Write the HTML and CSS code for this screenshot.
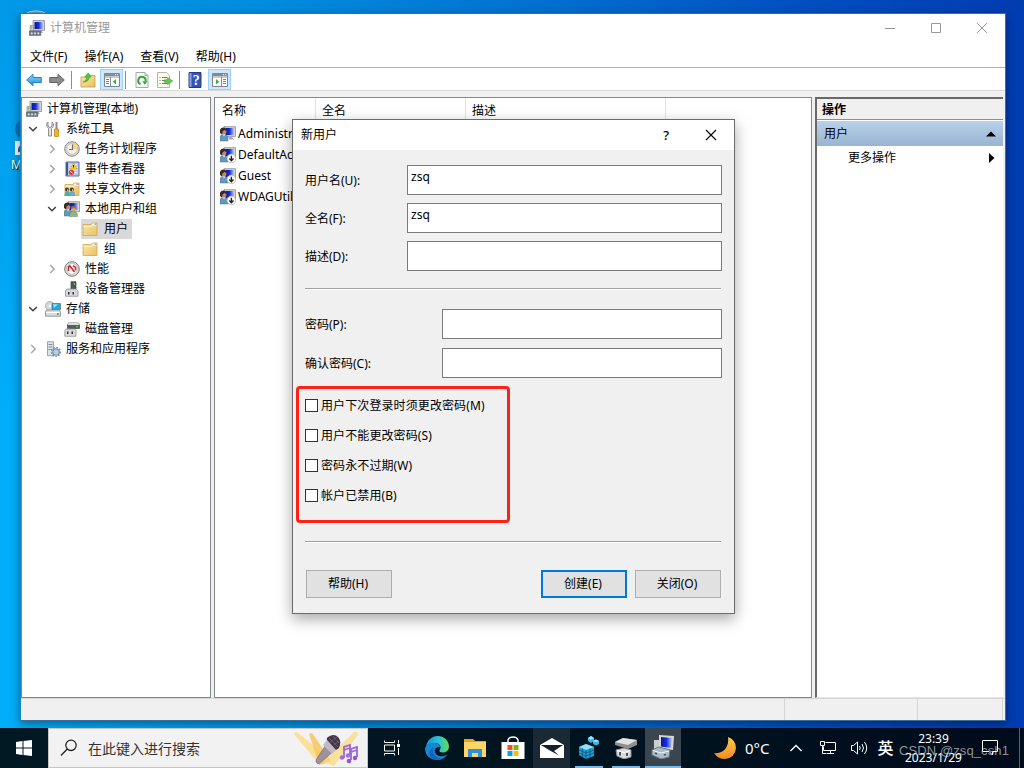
FILE: index.html
```html
<!DOCTYPE html>
<html lang="zh-CN">

<head>
    <meta charset="UTF-8">
    <meta name="viewport" content="width=device-width, initial-scale=1.0">
    <title>计算机管理</title>
    <link rel="stylesheet" href="styles.css">
</head>

<body>
    <!-- Shared icons -->
    <svg class="sprite" width="0" height="0">
        <defs>
            <linearGradient id="screen" x1="0" y1="0" x2="1" y2="0">
                <stop offset="0" stop-color="#0813a5" />
                <stop offset=".5" stop-color="#1730dd" />
                <stop offset="1" stop-color="#b7c9ff" />
            </linearGradient>
            <linearGradient id="folderFill" x1="0" y1="0" x2="1" y2="1">
                <stop offset="0" stop-color="#fbe8a6" />
                <stop offset="1" stop-color="#e9c163" />
            </linearGradient>
            <linearGradient id="arrowBlue" x1="0" y1="0" x2="0" y2="1">
                <stop offset="0" stop-color="#8fdcff" />
                <stop offset="1" stop-color="#168ad8" />
            </linearGradient>
            <linearGradient id="edgeTop" x1="0" y1="0" x2="1" y2="0">
                <stop offset="0" stop-color="#1693d9" />
                <stop offset=".55" stop-color="#2bc3d2" />
                <stop offset="1" stop-color="#62dc55" />
            </linearGradient>
            <linearGradient id="moonFill" x1="0" y1="0" x2="0" y2="1">
                <stop offset="0" stop-color="#ffc94d" />
                <stop offset="1" stop-color="#f08a24" />
            </linearGradient>
        </defs>
        <symbol id="computer" viewBox="0 0 16 16">
            <path d="M4 .5h11.500v10H4z" fill="#d5d2c8" stroke="#8b8d94" stroke-width=".8" />
            <path d="M5.500 2h8.500v7H5.500z" fill="url(#screen)" />
            <path d="M1 5.500h3.500V11H1z" fill="#c8c9c7" stroke="#81858b" stroke-width=".6" />
            <path d="M1.600 6.300h1.600v2H1.600z" fill="#65c95c" />
            <path d="M9 11h4l1 2H9z" fill="#b9bbc0" />
            <path d="M.5 11h11.300v4.400H.5z" fill="#6d7c85" stroke="#4c5a62" stroke-width=".6" />
            <path d="M2 12.600h1.600v1.600H2zM5.200 12.600h1.600v1.600H5.200zM8.500 12.600h1.600v1.600H8.500z" fill="#e4e9ec" />
        </symbol>
        <symbol id="user" viewBox="0 0 16 16">
            <path d="M4 .7h11.500v10H4z" fill="#d6d3ca" stroke="#8d8f96" stroke-width=".8" />
            <path d="M5.500 2h8.500v7H5.500z" fill="url(#screen)" />
            <path d="M9 11h3l2 2.500H9z" fill="#a7a9ac" />
            <path d="M0 15v-3.500q0-3 3.800-3 4.200 0 4.200 3.500V15z" fill="#6298bd" stroke="#486f8b" stroke-width=".5" />
            <circle cx="3.700" cy="5.800" r="2.700" fill="#c58a62" />
            <path d="M0 7V3.800Q1 1.300 4 1.500 6.500 2 6.300 5L4.500 4 2.500 5.500 2 8.500z" fill="#3a2a20" />
            <path d="M3 8.600l1 2 1.200-2z" fill="#fff" />
        </symbol>
        <symbol id="disabledUser" viewBox="0 0 16 16">
            <use href="#user" />
            <circle cx="11.400" cy="11.400" r="4.400" fill="#fff" stroke="#a5a5a5" stroke-width=".7" />
            <path d="M11.400 8.700v4.500M9.300 11.600l2.100 2.100 2.100-2.100" fill="none" stroke="#222" stroke-width="1.400" />
        </symbol>
        <symbol id="folder" viewBox="0 0 16 16">
            <path d="M1 3.500h8l1.200-1.500H15v12.500H1z" fill="url(#folderFill)" stroke="#d0a552" stroke-width=".8" />
            <path d="M10.500 2.600h3.800v1.500h-3.800z" fill="#fff" />
            <path d="M12.400 2.600h1.900v1.200h-1.900z" fill="#3e9be2" />
            <path d="M1.500 5.500h8L11 4.300h3.500" fill="none" stroke="#fff3c9" stroke-width=".8" />
        </symbol>
        <symbol id="expanded" viewBox="0 0 10 10">
            <path d="M1.200 3L5 6.800 8.800 3" fill="none" stroke="#404040" stroke-width="1.500" />
        </symbol>
        <symbol id="collapsed" viewBox="0 0 10 10">
            <path d="M3.200 1l4 4-4 4" fill="none" stroke="#a3a3a3" stroke-width="1.400" />
        </symbol>
        <symbol id="paneWindow" viewBox="0 0 16 16">
            <path d="M.5 1.500h15v13H.5z" fill="#fff" stroke="#7e8790" />
            <path d="M1 2h14v2.500H1z" fill="#858e96" />
            <path d="M11 2.700h1M13 2.700h1" stroke="#fff" />
            <path d="M1 5.500h14" stroke="#c5cbd0" />
        </symbol>
        <symbol id="edge" viewBox="0 0 24 24">
            <path d="M1 11C2 4 7 0 12.500 0 19 0 24 4.800 24 10.500c0 3.500-2.500 6-6 6-3 0-4.300-1-3.400-2.200 2.700-3.800-.5-7.300-4.600-7.300C6 7 2.500 8.700 1 11z" fill="url(#edgeTop)" />
            <path d="M0 12.500C1 8.500 5.500 6.500 9.500 6.800c3.500.3 5.500 2.500 5.500 4.200-6-1-7 6-2 8.500 3 1.500 6.500 1 9.500-1.500C20 22 16.500 24 12 24 5 24 0 19 0 12.500z" fill="#1687d6" />
            <path d="M8.500 11.200C6 16 10 22.500 17 22.500c-3 2-7 1.500-9.500 0C2.500 19 4 13.500 8.500 11.200z" fill="#1263b8" />
        </symbol>
    </svg>

    <div class="desktop">
        <svg class="recycle-bin" viewBox="0 0 24 6"><path d="M0 5.500Q12-2 24 5.500" fill="#5a9fc9" stroke="#bdd2dd" /></svg>
        <div class="desktop-shortcut">
            <svg class="shortcut-edge" viewBox="0 0 24 24"><path d="M24 0C9 0 0 7 0 15q0 6 7 9h17z" fill="#0c72bd" /></svg>
            <svg class="shortcut-arrow" viewBox="0 0 14 14"><path d="M0 0h14v14H0z" fill="#f4f4f4" /><path d="M4 11q-1-6 5-7" fill="none" stroke="#265f9d" stroke-width="2" /></svg>
            <span>M</span>
        </div>

        <!-- Computer Management -->
        <div class="window">
            <div class="title-bar">
                <svg class="icon"><use href="#computer" /></svg>
                <span class="window-title">计算机管理</span>
                <div class="window-controls">
                    <svg viewBox="0 0 12 12"><path d="M1 6.500h10" /></svg>
                    <svg viewBox="0 0 12 12"><path d="M1.500 1.500h9v9h-9z" /></svg>
                    <svg viewBox="0 0 12 12"><path d="M1 1l10 10M11 1L1 11" /></svg>
                </div>
            </div>
            <div class="menu-bar">
                <span>文件(F)</span>
                <span>操作(A)</span>
                <span>查看(V)</span>
                <span>帮助(H)</span>
            </div>
            <div class="toolbar">
                <svg class="icon" viewBox="0 0 16 16"><path d="M.7 8L7 2.300V5.500h8.300v5H7v3.200z" fill="url(#arrowBlue)" stroke="#2682bd" /></svg>
                <svg class="icon forward" viewBox="0 0 16 16"><path d="M15.300 8L9 2.300V5.500H.7v5H9v3.200z" fill="#8c8c8c" stroke="#666" /></svg>
                <i class="divider"></i>
                <svg class="icon up" viewBox="0 0 16 16"><path d="M1 5h5l1-1.500h8V15H1z" fill="url(#folderFill)" stroke="#c39d50" stroke-width=".8" /><path d="M3 10q4-1 4-5H4.800L8.200 1l3 4H9.200Q9 10 3 10z" fill="#58c936" stroke="#2d9224" stroke-width=".6" /></svg>
                <span class="tool-active"><svg class="icon" viewBox="0 0 16 16"><use href="#paneWindow" /><path d="M6.500 5v9" stroke="#858e96" /><path d="M2 7.500h3M2 9.500h3M2 11.500h3" stroke="#528ac4" /><path d="M12 7v5.500L8.800 9.800z" fill="#43ae2e" /></svg></span>
                <i class="divider"></i>
                <svg class="icon refresh" viewBox="0 0 16 16"><path d="M2 .5h9l3 3v12H2z" fill="#f7f7f7" stroke="#aaa" /><path d="M11 .5v3h3" fill="none" stroke="#aaa" /><path d="M6.500 12A3.700 3.700 0 1 1 11.500 9.500" fill="none" stroke="#35a638" stroke-width="2" /><path d="M8.300 9.300h5.200l-2.600 3.500z" fill="#35a638" /></svg>
                <svg class="icon export" viewBox="0 0 16 16"><path d="M.5.500h9l3 3v12H.5z" fill="#fffbea" stroke="#b9b4a3" /><path d="M2.500 5.500h1M5 5.500h5M2.500 8.500h1M5 8.500h4M2.500 11.500h1M5 11.500h5" stroke="#777" /><path d="M7.500 7.700h3V5.400L15.800 9l-5.300 3.700v-2.300h-3z" fill="#62c94c" stroke="#3e9b35" stroke-width=".5" /></svg>
                <i class="divider"></i>
                <svg class="icon help" viewBox="0 0 16 16"><path d="M2 .5h12v15H2z" fill="#3556b8" stroke="#263d84" /><path d="M2.500 1h2v14h-2z" fill="#8fa4db" /><text x="9.300" y="12.500" text-anchor="middle" fill="#fff" font-size="14" font-family="Liberation Serif" font-weight="bold">?</text></svg>
                <span class="tool-active"><svg class="icon" viewBox="0 0 16 16"><use href="#paneWindow" /><path d="M9.500 5v9" stroke="#858e96" /><path d="M11 7.500h3M11 9.500h3M11 11.500h3" stroke="#528ac4" /><path d="M4 7v5.500l3.200-2.700z" fill="#43ae2e" /></svg></span>
            </div>

            <div class="panes">
                <div class="tree">
                    <div class="node root"><svg class="icon"><use href="#computer" /></svg><span>计算机管理(本地)</span></div>
                    <div class="node level-1">
                        <svg class="chevron"><use href="#expanded" /></svg>
                        <svg class="icon" viewBox="0 0 16 16"><path d="M3 1v4l2 1.500L7 5V1q2 1 1.500 4L6.500 7.500V15h-3V7.500L1.700 5Q1.200 2 3 1z" fill="#e1e3e4" stroke="#777" stroke-width=".8" /><path d="M10.500 1h2v7h-2z" fill="#8a8a8a" /><path d="M9.500 8h4v7.500h-4z" fill="#f3b51e" stroke="#bd7f13" stroke-width=".7" /></svg>
                        <span>系统工具</span>
                    </div>
                    <div class="node level-2">
                        <svg class="chevron"><use href="#collapsed" /></svg>
                        <svg class="icon" viewBox="0 0 16 16"><circle cx="8" cy="8" r="7.300" fill="#ddd" stroke="#898989" /><circle cx="8" cy="8" r="5.400" fill="#f5f1dc" stroke="#aaa" stroke-width=".6" /><path d="M8 3h5v5H8z" fill="#f7d77c" /><path d="M8.500 3.500v5H5" fill="none" stroke="#5875a5" stroke-width="1.200" /></svg>
                        <span>任务计划程序</span>
                    </div>
                    <div class="node level-2">
                        <svg class="chevron"><use href="#collapsed" /></svg>
                        <svg class="icon" viewBox="0 0 16 16"><path d="M2 1h13v14H2z" fill="#b9cae4" stroke="#546f9d" /><path d="M3 1.500v13" stroke="#3d568b" stroke-width="2" /><path d="M5.500 4h8M5.500 6.500h8M5.500 9h8M5.500 11.500h8" stroke="#fff" stroke-width=".8" /><path d="M9.500 2l3.500 6H6z" fill="#ffd22a" stroke="#b28d1b" stroke-width=".5" /><path d="M9.500 4v2.500" stroke="#222" /><circle cx="7.500" cy="11.300" r="2.600" fill="#d3393d" /><path d="M6.300 10.100l2.400 2.400" stroke="#fff" /></svg>
                        <span>事件查看器</span>
                    </div>
                    <div class="node level-2">
                        <svg class="chevron"><use href="#collapsed" /></svg>
                        <svg class="icon" viewBox="0 0 16 16"><use href="#folder" /><circle cx="3" cy="8.500" r="2" fill="#49382f" /><circle cx="7.800" cy="8.500" r="2" fill="#49382f" /><path d="M.5 15q0-5 3-5t2.500 5z" fill="#45b39d" /><path d="M5.500 15q0-5 3-5t2.500 5z" fill="#70a8c8" /><path d="M3 8l1.500 1L3 10.500zM8 8l1.500 1L8 10.500z" fill="#efc49b" /></svg>
                        <span>共享文件夹</span>
                    </div>
                    <div class="node level-2">
                        <svg class="chevron"><use href="#expanded" /></svg>
                        <svg class="icon" viewBox="0 0 16 16"><use href="#user" /><circle cx="9.500" cy="8.300" r="2.300" fill="#d6a77e" /><path d="M7 8q-.5-3 2.700-3t2.500 3l-2-1z" fill="#a86e35" /><path d="M5.500 15.500q0-5 4-5t4 5z" fill="#91b685" stroke="#668a61" stroke-width=".5" /></svg>
                        <span>本地用户和组</span>
                    </div>
                    <div class="node level-3 selected"><svg class="icon"><use href="#folder" /></svg><span>用户</span></div>
                    <div class="node level-3"><svg class="icon"><use href="#folder" /></svg><span>组</span></div>
                    <div class="node level-2">
                        <svg class="chevron"><use href="#collapsed" /></svg>
                        <svg class="icon" viewBox="0 0 16 16"><circle cx="8" cy="8" r="7.300" fill="#e1e1e1" stroke="#777" /><circle cx="8" cy="8" r="5.400" fill="#fff" stroke="#aaa" stroke-width=".7" /><path d="M4.500 10V6l2-1.500M5.500 4.500l5 6.500M9 4.500l2.500 2v3" fill="none" stroke="#c9272d" stroke-width="1.600" /></svg>
                        <span>性能</span>
                    </div>
                    <div class="node level-2">
                        <i class="chevron"></i>
                        <svg class="icon" viewBox="0 0 16 16"><path d="M7 .7h5V9H7z" fill="#555" stroke="#333" stroke-width=".6" /><path d="M10 2h1v2h-1z" fill="#54dc58" /><path d="M3 8h9l2 2v5.300H1.500V10z" fill="#d5d7dc" stroke="#85888e" stroke-width=".7" /><path d="M4 11h1.500v2.500H4zM8.500 11H10v2.500H8.500z" fill="#333" /></svg>
                        <span>设备管理器</span>
                    </div>
                    <div class="node level-1">
                        <svg class="chevron"><use href="#expanded" /></svg>
                        <svg class="icon" viewBox="0 0 16 16"><circle cx="5" cy="5" r="4.500" fill="#d4dadb" stroke="#8f999b" stroke-width=".7" /><circle cx="5" cy="5" r="1.300" fill="#fff" /><path d="M7 2.500h8.500v6H7z" fill="#2aa5d4" stroke="#486e80" stroke-width=".7" /><path d="M8 3.300h5L9 7z" fill="#8ce4f4" /><path d="M1.500 9h13l1 2v4.200H.5V11z" fill="#d8dce0" stroke="#7e868b" stroke-width=".8" /><path d="M1 11.500h14" stroke="#fff" /><path d="M12 12h1.700v2H12z" fill="#49ae3a" /></svg>
                        <span>存储</span>
                    </div>
                    <div class="node level-2">
                        <i class="chevron"></i>
                        <svg class="icon" viewBox="0 0 16 16"><path d="M4.500 2h10l1 2v3.500h-12V4z" fill="#555b5e" stroke="#333" stroke-width=".6" /><path d="M4.500 2h10l1 2h-12z" fill="#dedfe1" /><path d="M12 5h2v1.300h-2z" fill="#42df49" /><path d="M2 8h8.500l1.500 1.500v5.800H.8V9.500z" fill="#d7d8dc" stroke="#85888e" stroke-width=".7" /><path d="M3 10.500h1.500V13H3zM7.500 10.500H9V13H7.500z" fill="#333" /></svg>
                        <span>磁盘管理</span>
                    </div>
                    <div class="node level-1">
                        <svg class="chevron"><use href="#collapsed" /></svg>
                        <svg class="icon" viewBox="0 0 16 16"><path d="M2.500.7h6v14h-6z" fill="#dbe1e5" stroke="#87949d" stroke-width=".8" /><path d="M3.500 3.500h4M3.500 6h4M3.500 8.500h4" stroke="#82919b" /><circle cx="11" cy="11" r="3.200" fill="#c9def0" stroke="#718fb0" stroke-width="1.300" /><circle cx="11" cy="11" r="4.500" fill="none" stroke="#718fb0" stroke-width="1.400" stroke-dasharray="1.500 1.500" /><circle cx="11" cy="11" r="1.200" fill="#fff" stroke="#718fb0" stroke-width=".6" /></svg>
                        <span>服务和应用程序</span>
                    </div>
                </div>

                <div class="list">
                    <div class="list-header">
                        <span>名称</span>
                        <span class="wide">全名</span>
                        <span class="widest">描述</span>
                    </div>
                    <div class="list-row"><svg class="icon"><use href="#user" /></svg>Administrator</div>
                    <div class="list-row"><svg class="icon"><use href="#disabledUser" /></svg>DefaultAccount</div>
                    <div class="list-row"><svg class="icon"><use href="#disabledUser" /></svg>Guest</div>
                    <div class="list-row"><svg class="icon"><use href="#disabledUser" /></svg>WDAGUtilityAccount</div>
                </div>

                <div class="actions">
                    <div class="actions-title">操作</div>
                    <div class="actions-group"><span>用户</span><svg width="10" height="6" viewBox="0 0 10 6"><path d="M0 5.500L5 .5l5 5z" /></svg></div>
                    <div class="actions-item"><span>更多操作</span><svg width="6" height="10" viewBox="0 0 6 10"><path d="M0 0l5.500 5L0 10z" /></svg></div>
                </div>
            </div>
            <div class="status-bar"><i class="status-main"></i><i class="status-middle"></i><i class="status-end"></i></div>
        </div>

        <!-- New user dialog -->
        <div class="dialog">
            <div class="dialog-title">
                <span>新用户</span>
                <span class="question">?</span>
                <svg width="12" height="12" viewBox="0 0 12 12"><path d="M1 1l10 10M11 1L1 11" fill="none" stroke="#000" stroke-width="1.100" /></svg>
            </div>
            <div class="dialog-body">
                <div class="field"><label for="user-name">用户名(U):</label><input id="user-name" type="text" value="zsq"></div>
                <div class="field"><label for="full-name">全名(F):</label><input id="full-name" type="text" value="zsq"></div>
                <div class="field"><label for="description">描述(D):</label><input id="description" type="text"></div>
                <hr>
                <div class="field password"><label for="password">密码(P):</label><input id="password" type="password"></div>
                <div class="field password confirm"><label for="confirm">确认密码(C):</label><input id="confirm" type="password"></div>
                <div class="options">
                    <label><input type="checkbox"><span>用户下次登录时须更改密码(M)</span></label>
                    <label><input type="checkbox"><span>用户不能更改密码(S)</span></label>
                    <label><input type="checkbox"><span>密码永不过期(W)</span></label>
                    <label><input type="checkbox"><span>帐户已禁用(B)</span></label>
                </div>
                <hr class="bottom-rule">
                <div class="buttons">
                    <button>帮助(H)</button>
                    <button class="primary">创建(E)</button>
                    <button>关闭(O)</button>
                </div>
            </div>
        </div>

        <!-- Taskbar -->
        <div class="taskbar">
            <div class="start"><svg width="16" height="16" viewBox="0 0 16 16"><path d="M0 2l6.500-1v6.500H0zM7.500.9L16 0v7.500H7.500zM0 8.500h6.500V15L0 14zM7.500 8.500H16V16l-8.500-1z" fill="#fff" /></svg></div>
            <div class="search">
                <svg class="search-icon" viewBox="0 0 18 18"><circle cx="11" cy="6.300" r="5.200" /><path d="M7.300 10L1 16.500" /></svg>
                <span>在此键入进行搜索</span>
                <svg class="search-art" viewBox="0 0 66 36">
                    <path d="M1 4Q2 1 5 3l32 26q-4 7-11 5z" fill="#fbdc80" opacity=".8" />
                    <path d="M16 4q2-2 4 0l18 27-12 4z" fill="#f6c45c" opacity=".8" />
                    <path d="M61 2q4-1 4 3L41 36l-11-4z" fill="#fbdb76" opacity=".7" />
                    <path d="M23 30l11-17 8 7-15 13q-4 2-4-3z" fill="#9c929d" stroke="#766d7c" stroke-width=".7" />
                    <path d="M34 10l9 10-4 4-9-9z" fill="#c3bbc4" />
                    <path d="M35 7q6-4 10 0 4 4 1 11l-3 2-9-10q-1-2 1-3z" fill="#443548" />
                    <path d="M36 8l9 9M40 6l6 7M44 7l-7 5M46 11l-5 4" stroke="#79647d" stroke-width=".7" />
                    <path d="M51 28V17l6-2v10M51 20l6-2M58 30V19l6-2v10M58 22l6-2" fill="none" stroke="#9c65da" stroke-width="1.800" />
                    <circle cx="49" cy="27.500" r="2.300" fill="#a56be0" /><circle cx="55" cy="25.500" r="2.200" fill="#a56be0" /><circle cx="56" cy="31" r="2.300" fill="#9257d1" /><circle cx="62" cy="28" r="2.200" fill="#9257d1" />
                </svg>
            </div>
            <div class="task task-view"><svg width="16" height="16" viewBox="0 0 16 16"><path d="M.5.500v2h10v-2M.5 15.500v-2h10v2M.5 5h10v6H.5zM14.500 0v3.500M14.500 8v7" fill="none" stroke="#fff" /><path d="M13 4h3v3h-3z" fill="#fff" /></svg></div>
            <div class="task"><svg width="24" height="24"><use href="#edge" /></svg></div>
            <div class="task"><svg width="22" height="20" viewBox="0 0 22 20"><path d="M0 1h9l2 2h11v16H0z" fill="#e6a51f" /><path d="M0 4h22v15H0z" fill="#ffd567" /><path d="M4 11h14v8h-4v-4H8v4H4z" fill="#2d91dc" /></svg></div>
            <div class="task"><svg width="24" height="24" viewBox="0 0 24 24"><path d="M7 7V4q1-3 5-3t5 3v3" fill="none" stroke="#fff" stroke-width="1.500" /><path d="M.5 6h23v17H.5z" fill="#fff" /><path d="M6.500 9h5v5h-5z" fill="#f25022" /><path d="M12.500 9h5v5h-5z" fill="#7fba00" /><path d="M6.500 15h5v5h-5z" fill="#00a4ef" /><path d="M12.500 15h5v5h-5z" fill="#ffb900" /></svg></div>
            <div class="task mail"><svg width="24" height="20" viewBox="0 0 24 20"><path d="M0 7L12 0l12 7v13H0z" fill="#fff" /><path d="M1 7h22l-9 6 5 4.500L9 12z" fill="#13212d" /></svg></div>
            <div class="task running"><svg width="24" height="24" viewBox="0 0 24 24"><path d="M2 12l7-3 8 3v9l-8 3-7-4z" fill="#239bd1" /><path d="M2 12l7-3 8 3-8 3z" fill="#8de3fb" /><path d="M9 15v9M2 15l7 3 8-3M2 18l7 3 8-3M5.500 13.500v9M13 13.500v9" stroke="#0b557f" stroke-width=".8" fill="none" /><path d="M11 3l3-2 3 2v3l-3 2-3-2zM16 6l3-1.500L22 6v3l-3 1.500L16 9z" fill="#31b7e8" /><path d="M11 3l3-2 3 2-3 1.500zM16 6l3-1.500L22 6l-3 1.300z" fill="#95eaff" /></svg></div>
            <div class="task running"><svg width="24" height="24" viewBox="0 0 24 24"><path d="M1 7l8-4 14 2v5l-9 4L1 10z" fill="#8d8f91" /><path d="M1 7l8-4 14 2-9 5z" fill="#e2e2e2" /><path d="M2 15l8-2 7 2v7l-7 2-7-3z" fill="#dadbdd" stroke="#8a8c90" /><path d="M6 17v3.500M13 18v3" stroke="#333" stroke-width="1.600" /><path d="M3 15.500l7 2 6-2" fill="none" stroke="#fff" /></svg></div>
            <div class="task running active"><svg width="24" height="24" viewBox="0 0 24 24"><path d="M8 0l15 1-1 14-14-2z" fill="#d9d7cd" /><path d="M10 2l11 1-1 10-10-1.500z" fill="url(#screen)" /><path d="M3 5h5v11H3z" fill="#c9cdce" /><path d="M1 15l7-3 11 3-1 7-8 2-9-4z" fill="#a9bdc9" stroke="#657984" /><path d="M2 15.500l8 2.500 8-2" fill="none" stroke="#edf4f7" /><path d="M4 18l2 1M13 20l2-.5" stroke="#445861" stroke-width="1.500" /></svg></div>
            <div class="weather"><svg width="22" height="22" viewBox="0 0 22 22"><path d="M14 0q8 3 8 11-1 10-11 11Q4 22 0 16q8 1 12-5 3-5 2-11z" fill="url(#moonFill)" /></svg><span>0°C</span></div>
            <svg class="caret" viewBox="0 0 12 8"><path d="M.5 7L6 1.500 11.500 7" /></svg>
            <svg class="network" viewBox="0 0 16 14"><path d="M5.500 1.500h10v8h-12v-4M10.500 9.500v3M7 12.500h7M.5.500h4v4h-4zM2.500 4.500v8h4" /></svg>
            <svg class="volume" viewBox="0 0 17 14"><path d="M.5 4.500h2l4-3.500v12l-4-3.500h-2zM8.500 5q1.500 2 0 4M11 3q3 4 0 8M13.500 1q4.500 6 0 12" /></svg>
            <span class="language">英</span>
            <div class="clock"><span>23:39</span><span>2023/1/29</span></div>
            <svg class="notification" viewBox="0 0 16 16"><path d="M.5.500h15v11h-5V15L7 11.500H.5z" /></svg>
            <i class="show-desktop"></i>
        </div>
        <div class="watermark">CSDN @zsq_csh1</div>
    </div>
</body>

</html>
```

FILE: styles.css
```css
* {
    box-sizing: border-box;
}

body {
    margin: 0;
    overflow: hidden;
    font-family: "Noto Sans", "Noto Sans CJK SC", sans-serif;
    font-size: 12px;
    line-height: 20px;
    color: #000;
}

svg {
    display: block;
    flex: none;
}

.sprite {
    position: absolute;
}

.desktop {
    position: relative;
    width: 1024px;
    height: 768px;
    overflow: hidden;
    background: linear-gradient(165deg, rgba(0, 70, 160, 0.2), rgba(0, 190, 255, 0) 40%), linear-gradient(90deg, #00aefa 0%, #009beb 25%, #0078d8 52%, #0050c5 78%, #003bb2 100%);
}

.icon {
    width: 16px;
    height: 16px;
}

.recycle-bin {
    position: absolute;
    left: 24px;
    top: 9px;
    width: 24px;
    height: 6px;
}

.desktop-shortcut {
    position: absolute;
    left: 11px;
    top: 112px;
    color: #fff;
    text-shadow: 1px 1px 1px #000;
}

.shortcut-edge {
    width: 24px;
    height: 29px;
    margin-left: 4px;
}

.shortcut-arrow {
    width: 14px;
    height: 14px;
    margin-left: 4px;
}

/* Main window */
.window {
    position: absolute;
    left: 20px;
    top: 13px;
    width: 986px;
    height: 708px;
    display: flex;
    flex-direction: column;
    background: #f0f0f0;
    border: 1px solid #3c6c9c;
    border-left-color: #1883bd;
    box-shadow: 0 3px 9px rgba(0, 0, 0, 0.4);
}

.title-bar {
    height: 28px;
    display: flex;
    align-items: center;
    padding-left: 8px;
    background: #fff;
    color: #999;
}

.window-title {
    margin-left: 5px;
}

.window-controls {
    display: flex;
    gap: 34px;
    margin-left: auto;
    padding-right: 17px;
}

.window-controls svg {
    width: 12px;
    height: 12px;
    fill: none;
    stroke: #999;
}

.menu-bar {
    height: 26px;
    display: flex;
    gap: 17px;
    padding: 5px 9px 0;
    background: #fff;
    border-bottom: 1px solid #a9b0bb;
}

.toolbar {
    height: 23px;
    display: flex;
    align-items: center;
    padding: 1px 0 0 5px;
    background: #fff;
    border-bottom: 1px solid #d9d9d9;
}

.forward {
    margin-left: 7px;
}

.divider {
    width: 1px;
    height: 18px;
    background: #8d8d8d;
}

.forward + .divider {
    margin-left: 6px;
}

.up {
    margin: 0 4px 0 8px;
}

.tool-active {
    width: 23px;
    height: 21px;
    display: flex;
    align-items: center;
    justify-content: center;
    background: #cce8ff;
    border: 1px solid #99d1ff;
}

.tool-active + .divider {
    margin-left: 2px;
}

.refresh {
    margin-left: 8px;
}

.export {
    margin-left: 7px;
    margin-right: 6px;
}

.help {
    margin: 0 5px 0 7px;
}

.panes {
    flex: 1;
    display: flex;
    gap: 3px;
    padding: 6px 2px 0 0;
}

.tree {
    width: 190px;
    padding: 1px 0 0 1px;
    background: #fff;
    border: 1px solid #828790;
    border-right-width: 1px;
    border-left-width: 1px;
}

.node {
    height: 20px;
    display: flex;
    align-items: center;
}

.node span {
    margin-left: 5px;
    white-space: nowrap;
}

.root {
    padding-left: 3px;
}

.chevron {
    width: 10px;
    height: 10px;
    flex: none;
    margin-right: 7px;
}

.level-1 {
    padding-left: 5px;
}

.level-2 {
    padding-left: 24px;
}

.level-3 {
    width: 51px;
    margin-left: 58px;
    padding-left: 1px;
}

.level-3 span {
    margin-left: 6px;
}

.selected {
    background: #d9d9d9;
}

.list {
    width: 598px;
    background: #fff;
    border: 1px solid #828790;
}

.list-header {
    height: 25px;
    display: flex;
}

.list-header span {
    width: 101px;
    height: 23px;
    padding: 3px 6px 0 7px;
    border-right: 1px solid #e2e2e2;
}

.list-header .wide {
    width: 150px;
    padding-left: 6px;
}

.list-header .widest {
    width: 200px;
    padding-left: 6px;
}

.list-row {
    height: 21px;
    display: flex;
    align-items: center;
    gap: 2px;
    padding-left: 5px;
}

.actions {
    flex: 1;
    background: #fff;
    border: 2px solid #696969;
    border-right: 0;
    border-bottom: 1px solid #e3e3e3;
}

.actions-title {
    height: 21px;
    padding: 1px 0 0 5px;
    background: #f0f0f0;
    border-bottom: 1px solid #8d8d8d;
    font-weight: bold;
}

.actions-group {
    height: 25px;
    display: flex;
    align-items: center;
    justify-content: space-between;
    margin-top: 1px;
    padding: 0 7px;
    background: linear-gradient(#b9d1ea, #99b4d1);
}

.actions-item {
    height: 24px;
    display: flex;
    align-items: center;
    justify-content: space-between;
    padding: 0 8px 0 31px;
}

.status-bar {
    height: 22px;
    display: flex;
    border-top: 1px solid #d7d7d7;
}

.status-bar i {
    border-right: 1px solid #d5d5d5;
}

.status-main {
    width: 764px;
}

.status-middle {
    width: 133px;
}

.status-end {
    width: 85px;
}

/* Dialog */
.dialog {
    position: absolute;
    left: 292px;
    top: 119px;
    width: 443px;
    height: 495px;
    background: #f0f0f0;
    border: 1px solid #6b6b6b;
    box-shadow: 0 5px 14px rgba(0, 0, 0, 0.35);
}

.dialog-title {
    height: 30px;
    display: flex;
    align-items: center;
    padding: 0 17px 1px 8px;
    background: #fff;
}

.question {
    margin: 0 36px 0 auto;
    font-weight: 500;
    font-size: 13px;
}

.dialog-body {
    padding: 15px 12px 0;
}

.field {
    height: 30px;
    display: flex;
    align-items: center;
    margin-bottom: 8px;
}

.field label {
    width: 102px;
    padding-top: 2px;
}

.field input {
    width: 315px;
    height: 30px;
    margin: 0;
    padding: 0 3px 7px;
    background: #fff;
    border: 1px solid #7a7a7a;
    border-radius: 0;
    font: inherit;
}

.field.password label {
    width: 137px;
}

.field.password input {
    width: 280px;
}

hr {
    height: 2px;
    margin: 17px 1px 19px 0;
    border: 0;
    border-top: 1px solid #a0a0a0;
    border-bottom: 1px solid #fff;
}

.password {
    margin-bottom: 9px;
}

.confirm {
    margin-bottom: 8px;
}

.options {
    width: 214px;
    height: 137px;
    display: flex;
    flex-direction: column;
    gap: 10px;
    margin-left: -9px;
    padding: 6px;
    border: 3px solid #ff2116;
    border-radius: 4px;
}

.options label {
    height: 20px;
    display: flex;
    align-items: center;
    white-space: nowrap;
    letter-spacing: 0.1px;
}

.options span {
    padding-top: 2px;
}

.options input {
    appearance: none;
    width: 13px;
    height: 13px;
    margin: 0 3px 0 0;
    background: #fff;
    border: 1px solid #333;
}

.bottom-rule {
    margin: 18px 1px 27px 0;
}

.buttons {
    display: flex;
    padding: 0 1px;
    gap: 8px;
}

.buttons button {
    width: 86px;
    height: 28px;
    padding: 0 2px 0 0;
    background: #e1e1e1;
    border: 1px solid #adadad;
    font: inherit;
    color: #000;
}

.buttons .primary {
    margin-left: auto;
    border: 2px solid #0078d7;
}

/* Taskbar */
.taskbar {
    position: absolute;
    left: 0;
    top: 728px;
    width: 1024px;
    height: 40px;
    display: flex;
    align-items: center;
    background: linear-gradient(90deg, #001923, #001420 55%, #000b1c);
    color: #fff;
}

.start {
    width: 48px;
    display: flex;
    justify-content: center;
}

.search {
    width: 320px;
    height: 40px;
    display: flex;
    align-items: center;
    padding-left: 11px;
    background: #f2f2f2;
    border: 1px solid #c5c5c5;
    color: #333;
    font-size: 14px;
}

.search span {
    padding-top: 2px;
}

.search-icon {
    width: 18px;
    height: 18px;
    margin-right: 10px;
    fill: none;
    stroke: #222;
    stroke-width: 1.3;
}

.search-art {
    width: 66px;
    height: 36px;
    margin: 0 8px 0 auto;
}

.task {
    width: 36px;
    height: 40px;
    display: flex;
    align-items: center;
    justify-content: center;
    margin-right: 2px;
}

.task-view {
    width: 48px;
    margin-right: 3px;
}

.mail {
    width: 37px;
    margin-right: 5px;
    background: #1b2935;
}

.running {
    width: 28px;
    margin-right: 9px;
    border-bottom: 2px solid #76b9ed;
}

.active {
    width: 36px;
    margin: 0 0 0 -4px;
    background: #3a4550;
}

.weather {
    display: flex;
    align-items: center;
    gap: 9px;
    margin-left: 33px;
    font-size: 15px;
}

.caret,
.network,
.volume,
.notification {
    fill: none;
    stroke: #fff;
}

.caret {
    width: 12px;
    height: 8px;
    margin-left: 21px;
    stroke-width: 1.3;
}

.network {
    width: 16px;
    height: 14px;
    margin-left: 18px;
}

.volume {
    width: 17px;
    height: 14px;
    margin-left: 15px;
}

.language {
    margin-left: 9px;
    font-size: 16px;
    font-weight: 500;
}

.clock {
    width: 66px;
    display: flex;
    flex-direction: column;
    align-items: center;
    margin-left: 7px;
    line-height: 19px;
}

.notification {
    width: 16px;
    height: 16px;
    margin-left: 15px;
}

.show-desktop {
    width: 1px;
    height: 40px;
    margin: 0 4px 0 auto;
    background: #59616d;
}

.watermark {
    position: absolute;
    left: 899px;
    top: 741px;
    font-family: "Liberation Sans", sans-serif;
    font-size: 13px;
    letter-spacing: 0.1px;
    color: rgba(220, 220, 220, 0.65);
    white-space: nowrap;
}
```
